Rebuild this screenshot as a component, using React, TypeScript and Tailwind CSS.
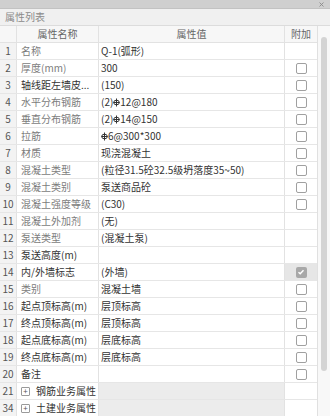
import React from "react";

type Row = {
  n: string;
  name: string;
  value: React.ReactNode;
  cb: "none" | "box" | "checked";
  gray?: boolean;
  group?: boolean;
};

const Rebar = () => (
  <svg width="7" height="9" viewBox="0 0 7 9" className="inline-block align-top mt-[1px]">
    <line x1="3.5" y1="0.5" x2="3.5" y2="8.5" stroke="#333" strokeWidth="1" />
    <ellipse cx="3.5" cy="4.5" rx="2.8" ry="2.3" fill="none" stroke="#333" strokeWidth="1" />
    <line x1="0.5" y1="4.5" x2="6.5" y2="4.5" stroke="#333" strokeWidth="1" />
  </svg>
);

const rows: Row[] = [
  { n: "1", name: "名称", value: "Q-1(弧形)", cb: "none", gray: true },
  { n: "2", name: "厚度(mm)", value: "300", cb: "box", gray: true },
  { n: "3", name: "轴线距左墙皮...", value: "(150)", cb: "box" },
  { n: "4", name: "水平分布钢筋", value: <>(2)<Rebar />12@180</>, cb: "box", gray: true },
  { n: "5", name: "垂直分布钢筋", value: <>(2)<Rebar />14@150</>, cb: "box", gray: true },
  { n: "6", name: "拉筋", value: <><Rebar />6@300*300</>, cb: "box", gray: true },
  { n: "7", name: "材质", value: "现浇混凝土", cb: "box", gray: true },
  { n: "8", name: "混凝土类型", value: "(粒径31.5砼32.5级坍落度35~50)", cb: "box", gray: true },
  { n: "9", name: "混凝土类别", value: "泵送商品砼", cb: "box", gray: true },
  { n: "10", name: "混凝土强度等级", value: "(C30)", cb: "box", gray: true },
  { n: "11", name: "混凝土外加剂", value: "(无)", cb: "none", gray: true },
  { n: "12", name: "泵送类型", value: "(混凝土泵)", cb: "none", gray: true },
  { n: "13", name: "泵送高度(m)", value: "", cb: "none" },
  { n: "14", name: "内/外墙标志", value: "(外墙)", cb: "checked" },
  { n: "15", name: "类别", value: "混凝土墙", cb: "box", gray: true },
  { n: "16", name: "起点顶标高(m)", value: "层顶标高", cb: "box" },
  { n: "17", name: "终点顶标高(m)", value: "层顶标高", cb: "box" },
  { n: "18", name: "起点底标高(m)", value: "层底标高", cb: "box" },
  { n: "19", name: "终点底标高(m)", value: "层底标高", cb: "box" },
  { n: "20", name: "备注", value: "", cb: "box" },
  { n: "21", name: "钢筋业务属性", value: "", cb: "none", group: true },
  { n: "34", name: "土建业务属性", value: "", cb: "none", group: true },
];

const font = { fontFamily: '"Noto Sans CJK SC", "Noto Sans", sans-serif' };

export default function App() {
  return (
    <div className="w-[330px] h-[416px] bg-white overflow-hidden text-[10px] leading-none" style={font}>
      <div className="h-[9px] bg-[#cfcfcf] border-b border-[#c2c2c2] flex items-center justify-end pr-[6px]">
        <svg width="5" height="5" viewBox="0 0 5 5">
          <path d="M0.5 0.5 L4.5 4.5 M4.5 0.5 L0.5 4.5" stroke="#8a8a8a" strokeWidth="0.9" />
        </svg>
      </div>
      <div className="h-[17px] bg-[#f0f0f0] border-b border-[#dcdcdc] flex items-center pl-[5px] text-[#8a8a8a]">属性列表</div>
      <div className="flex">
        <div className="w-[317px]">
          <div className="grid grid-cols-[17px_82px_186px_32px] h-[17px] border-b border-[#e2e2e2] bg-[#f7f7f7] text-[#666]">
            <div className="border-r border-[#e2e2e2]" />
            <div className="border-r border-[#e2e2e2] flex items-center justify-center">属性名称</div>
            <div className="border-r border-[#e2e2e2] flex items-center justify-center">属性值</div>
            <div className="flex items-center justify-center">附加</div>
          </div>
          {rows.map((r) => (
            <div key={r.n} className="grid grid-cols-[17px_82px_186px_32px] h-[17px] border-b border-[#e6e6e6]">
              <div className="bg-[#f3f3f3] border-r border-[#e2e2e2] flex items-center justify-center text-[#555]">{r.n}</div>
              <div className={`border-r border-[#e2e2e2] flex items-center pl-[4px] whitespace-nowrap overflow-hidden ${r.gray ? "text-[#7c7c7c]" : "text-[#333]"}`}>
                {r.group && (
                  <span className="w-[9px] h-[9px] border border-[#9a9a9a] rounded-[1px] mr-[6px] flex items-center justify-center text-[8px] text-[#555] leading-none">+</span>
                )}
                {r.name}
              </div>
              <div className={`border-r border-[#e2e2e2] flex items-center pl-[2px] whitespace-nowrap overflow-hidden text-[#333] ${r.group ? "bg-[#ececec]" : ""}`}>
                {r.value}
              </div>
              <div className={`flex items-center justify-center ${r.cb === "checked" ? "bg-[#e6e6e6]" : ""}`}>
                {r.cb === "box" && <span className="w-[11px] h-[11px] border border-[#a0a0a0] rounded-[2px] bg-white" />}
                {r.cb === "checked" && (
                  <span className="w-[11px] h-[11px] rounded-[2px] bg-[#a8a8a8] flex items-center justify-center">
                    <svg width="8" height="8" viewBox="0 0 8 8">
                      <path d="M1.5 4.2 L3.2 5.8 L6.5 2.2" fill="none" stroke="white" strokeWidth="1.4" />
                    </svg>
                  </span>
                )}
              </div>
            </div>
          ))}
        </div>
        <div className="w-[13px] bg-[#f8f8f8] border-l border-[#e0e0e0] pt-[11px] pl-[3px]">
          <div className="w-[6px] h-[334px] rounded-full bg-[#d4d4d4]" />
        </div>
      </div>
    </div>
  );
}
